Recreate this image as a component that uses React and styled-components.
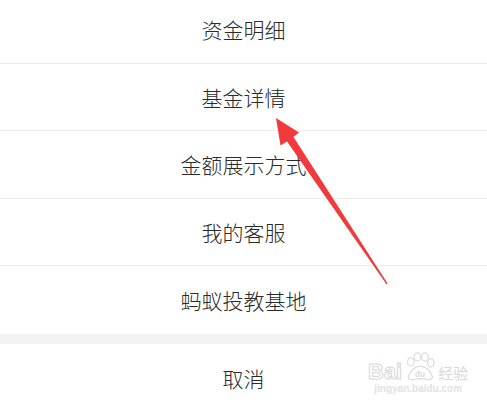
import React from 'react'
import styled, { createGlobalStyle } from 'styled-components'

const items = ['资金明细', '基金详情', '金额展示方式', '我的客服', '蚂蚁投教基地']

const App = () => {
   return (
      <Page>
         <Global />
         <Sheet>
            <Menu>
               {items.map((label) => (
                  <Item key={label}>{label}</Item>
               ))}
            </Menu>
            <Gap />
            <Cancel>取消</Cancel>
         </Sheet>

         <Arrow viewBox="0 0 487 406" width="487" height="406">
            <polygon
               points="276,118 299,132.5 293.5,137 387.6,283.6 386.6,284.4 287,141.5 280.5,145.5"
               fill="#f2393b"
            />
         </Arrow>

         <Watermark>
            <Brand>
               <BigText>Bai</BigText>
               <Paw viewBox="0 0 40 36" width="34" height="30">
                  <ellipse cx="9" cy="12" rx="4" ry="5" fill="none" stroke="#dcdcdc" strokeWidth="1.5" />
                  <ellipse cx="17" cy="6" rx="4" ry="5" fill="none" stroke="#dcdcdc" strokeWidth="1.5" />
                  <ellipse cx="26" cy="6" rx="4" ry="5" fill="none" stroke="#dcdcdc" strokeWidth="1.5" />
                  <ellipse cx="33" cy="13" rx="4" ry="5" fill="none" stroke="#dcdcdc" strokeWidth="1.5" />
                  <path d="M6 30 Q10 18 20 17 Q31 18 35 30 Q34 34 28 33 Q20 31 13 33 Q6 34 6 30 Z" fill="none" stroke="#dcdcdc" strokeWidth="1.5" />
                  <text x="20" y="30" textAnchor="middle" fontSize="10" fill="#dcdcdc" fontFamily="Liberation Sans, sans-serif" fontWeight="700">du</text>
               </Paw>
               <CnText>经验</CnText>
            </Brand>
            <Domain>jingyan.baidu.com</Domain>
         </Watermark>
      </Page>
   )
}

const Global = createGlobalStyle`
   html, body {
      margin: 0;
      padding: 0;
      background: #ffffff;
      overflow: hidden;
   }
`;

const Page = styled.div`
   position: relative;
   width: 487px;
   height: 406px;
   overflow: hidden;
   background: #ffffff;
   font-family: "Noto Sans CJK SC", "Noto Sans", sans-serif;
`;

const Sheet = styled.div`
   display: flex;
   flex-direction: column;
   margin-top: -4px;
`;

const Menu = styled.div`
   display: flex;
   flex-direction: column;
`;

const Item = styled.div`
   box-sizing: border-box;
   display: flex;
   align-items: center;
   justify-content: center;
   height: 67.5px;
   font-size: 21px;
   font-weight: 300;
   color: #2a2a2a;
   border-bottom: 1px solid #ececec;

   &:last-child {
      border-bottom: none;
   }
`;

const Gap = styled.div`
   height: 10px;
   background: #f3f3f3;
`;

const Cancel = styled.div`
   display: flex;
   align-items: center;
   justify-content: center;
   height: 68px;
   font-size: 21px;
   font-weight: 300;
   color: #2a2a2a;
`;

const Arrow = styled.svg`
   position: absolute;
   top: 0;
   left: 0;
   pointer-events: none;
`;

const Watermark = styled.div`
   position: absolute;
   left: 368px;
   top: 352px;
   display: flex;
   flex-direction: column;
   align-items: center;
   color: #dcdcdc;
`;

const Brand = styled.div`
   display: flex;
   align-items: flex-end;
   gap: 1px;
`;

const BigText = styled.span`
   font-family: "Liberation Sans", sans-serif;
   font-weight: 700;
   font-size: 22px;
   line-height: 22px;
   color: #ffffff;
   -webkit-text-stroke: 1px #d8d8d8;
`;

const Paw = styled.svg`
   display: block;
   margin-bottom: 1px;
`;

const CnText = styled.span`
   font-size: 15px;
   line-height: 20px;
   color: #d8d8d8;
`;

const Domain = styled.span`
   font-family: "Liberation Sans", sans-serif;
   font-size: 10px;
   font-weight: 700;
   line-height: 12px;
   color: #e2e2e2;
`;

export default App
